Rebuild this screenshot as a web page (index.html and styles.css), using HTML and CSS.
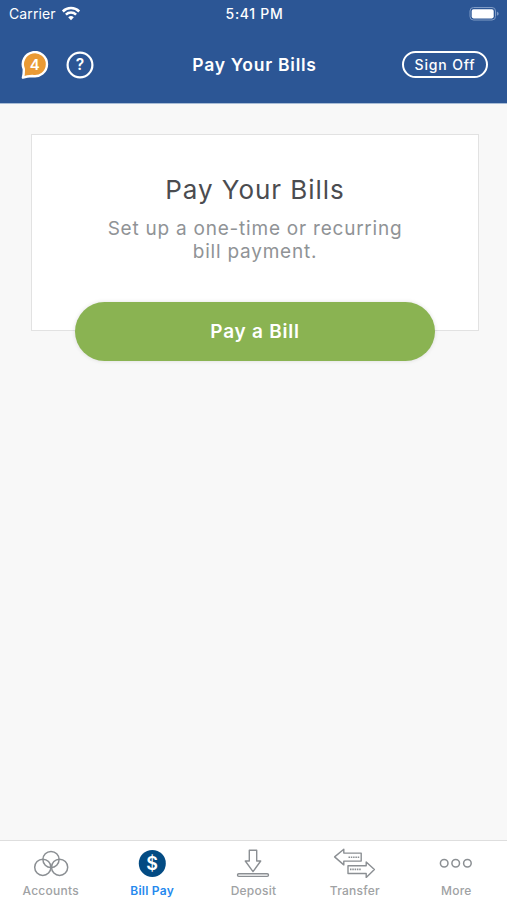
FILE: index.html
```html
<!DOCTYPE html>
<html lang="en">
<head>
    <meta charset="UTF-8">
    <meta name="viewport" content="width=device-width, initial-scale=1.0">
    <title>Pay Your Bills</title>
    <link rel="stylesheet" href="styles.css">
</head>
<body>
    <header>
        <div class="status-bar">
            <div class="carrier">
                <span>Carrier</span>
                <svg width="20" height="15" viewBox="0 0 20 15" fill="none" stroke="#fff" stroke-width="2.5">
                    <path d="M1.8 5.5a11.6 11.6 0 0 1 16.4 0"/>
                    <path d="M4.9 8.7a7.2 7.2 0 0 1 10.2 0"/>
                    <path d="M10 14.2l-2.8-2.9a4 4 0 0 1 5.6 0z" fill="#fff" stroke="none"/>
                </svg>
            </div>
            <span class="time">5:41 PM</span>
            <svg class="battery" width="31" height="16" viewBox="0 0 31 16">
                <rect x="1" y="1.5" width="25.5" height="12.5" rx="3.5" fill="none" stroke="#7f9bc5"/>
                <rect x="2.7" y="3.2" width="22" height="9.2" rx="1.8" fill="#fff"/>
                <path d="M27.9 5.6q1.8.7 1.8 2.1t-1.8 2.1z" fill="#7f9bc5"/>
            </svg>
        </div>
        <div class="nav-bar">
            <div class="nav-left">
                <button class="icon-button" aria-label="Messages">
                    <svg width="28" height="28" viewBox="0 0 28 28">
                        <path d="M1.9 26.6C3 23.5 2.8 21 2.8 18A12.1 12.1 0 1 1 11.3 25Q6.1 25.3 1.9 26.6z" fill="#e99a35" stroke="#fff" stroke-width="2.4" stroke-linejoin="round"/>
                        <text class="badge-text" x="13.8" y="18.8" text-anchor="middle">4</text>
                    </svg>
                </button>
                <button class="icon-button" aria-label="Help">
                    <svg width="28" height="28" viewBox="0 0 28 28">
                        <circle cx="14" cy="14" r="12.4" fill="none" stroke="#fff" stroke-width="2.2"/>
                        <text class="help-text" x="14" y="19.3" text-anchor="middle">?</text>
                    </svg>
                </button>
            </div>
            <h1>Pay Your Bills</h1>
            <button class="sign-off">Sign Off</button>
        </div>
    </header>

    <main>
        <section class="card">
            <h2>Pay Your Bills</h2>
            <p>Set up a one-time or recurring<br>bill payment.</p>
            <button class="pay-button">Pay a Bill</button>
        </section>
    </main>

    <nav class="tab-bar">
        <a class="tab">
            <svg width="44" height="32" viewBox="0 0 44 32" fill="none" stroke="#8b8f93" stroke-width="1.5">
                <circle cx="22" cy="11.5" r="8.1"/>
                <circle cx="13.8" cy="19.3" r="8.1"/>
                <circle cx="30.6" cy="19.3" r="8.1"/>
            </svg>
            <span>Accounts</span>
        </a>
        <a class="tab active">
            <svg width="44" height="32" viewBox="0 0 44 32">
                <circle cx="22.3" cy="15.4" r="13.5" fill="#034b83"/>
                <text class="dollar-text" x="22.3" y="21.6" text-anchor="middle">$</text>
            </svg>
            <span>Bill Pay</span>
        </a>
        <a class="tab">
            <svg width="44" height="32" viewBox="0 0 44 32" fill="none" stroke="#8b8f93" stroke-width="1.4" stroke-linejoin="round">
                <path d="M18.3 2.3h7.4v10.7h4L22 23.6l-7.7-10.6h4z"/>
                <rect x="6.5" y="25.7" width="31" height="2.7" rx="1.3"/>
            </svg>
            <span>Deposit</span>
        </a>
        <a class="tab">
            <svg width="44" height="32" viewBox="0 0 44 32" fill="none" stroke="#8b8f93" stroke-width="1.4" stroke-linejoin="round">
                <path d="M1.6 8.9l9.2-7.6v3.8h17.4v8H10.8v3.8z"/>
                <path d="M41.4 21.4l-8.2-7.5v3.8H15v7.8h18.2v3.9z"/>
                <path d="M15.5 9.2H27M17 21.4h11" stroke-dasharray="1.5 .8" stroke-width="1.6"/>
            </svg>
            <span>Transfer</span>
        </a>
        <a class="tab">
            <svg width="44" height="32" viewBox="0 0 44 32" fill="none" stroke="#8b8f93" stroke-width="1.5">
                <circle cx="10.2" cy="15.3" r="3.8"/>
                <circle cx="21.7" cy="15.3" r="3.8"/>
                <circle cx="33.4" cy="15.3" r="3.8"/>
            </svg>
            <span>More</span>
        </a>
    </nav>
</body>
</html>
```

FILE: styles.css
```css
* {
    box-sizing: border-box;
}

body {
    font-family: Inter, "Liberation Sans", sans-serif;
    background-color: #f8f8f8;
    display: flex;
    flex-direction: column;
    height: 100vh;
    margin: 0;
}

button {
    font-family: inherit;
    color: white;
    background: none;
    border: none;
    padding: 0;
    cursor: pointer;
}

svg {
    display: block;
}

header {
    height: 103px;
    background-color: #2c5695;
    color: white;
    box-shadow: 0 1px 0 #a9bdd6;
}

.status-bar,
.nav-bar {
    display: grid;
    grid-template-columns: 1fr auto 1fr;
    align-items: center;
}

.status-bar {
    height: 27px;
    padding: 0 7px 0 9px;
    font-size: 14px;
}

.carrier {
    display: flex;
    align-items: center;
    gap: 5px;
    letter-spacing: 0.1px;
}

.time {
    font-weight: 500;
    letter-spacing: 0.7px;
}

.battery {
    justify-self: end;
}

.nav-bar {
    height: 75px;
    padding: 0 19px 0 21px;
}

.nav-left {
    display: flex;
    gap: 17px;
}

.icon-button {
    width: 28px;
    height: 28px;
}

.badge-text,
.help-text,
.dollar-text {
    fill: white;
    font-weight: 600;
}

.badge-text {
    font-size: 15px;
}

.help-text {
    font-size: 15.5px;
}

.dollar-text {
    font-size: 18px;
}

h1 {
    margin: 0;
    font-size: 17.5px;
    font-weight: 600;
    letter-spacing: 0.75px;
}

.sign-off {
    justify-self: end;
    width: 86px;
    height: 27px;
    padding-bottom: 1px;
    border: 2px solid white;
    border-radius: 14px;
    font-size: 14px;
    font-weight: 500;
    letter-spacing: 0.85px;
}

main {
    flex: 1;
    padding: 31px 28px 0 31px;
}

.card {
    display: flex;
    flex-direction: column;
    align-items: center;
    height: 197px;
    padding-top: 38px;
    background-color: white;
    border: 1px solid #e2e2e2;
    text-align: center;
}

h2 {
    margin: 0;
    color: #4b4c50;
    font-size: 26px;
    font-weight: 400;
    line-height: 34px;
    letter-spacing: 0.95px;
}

.card p {
    margin: 10px 0 0;
    color: #909396;
    font-size: 19px;
    line-height: 23px;
    letter-spacing: 0.77px;
}

.pay-button {
    flex-shrink: 0;
    width: 360px;
    height: 59px;
    margin-top: 39px;
    border-radius: 30px;
    background-color: #8ab352;
    box-shadow: 0 0 4px rgba(0, 0, 0, 0.12);
    font-size: 19px;
    font-weight: 600;
    letter-spacing: 0.75px;
}

.tab-bar {
    display: grid;
    grid-template-columns: repeat(5, 1fr);
    height: 60px;
    padding-top: 7px;
    background-color: white;
    border-top: 1px solid #dedede;
}

.tab {
    display: flex;
    flex-direction: column;
    align-items: center;
    gap: 3px;
    color: #a0a2a4;
    font-size: 12px;
    font-weight: 500;
    line-height: 16px;
    letter-spacing: 0.25px;
}

.tab.active {
    color: #2589ee;
    font-weight: 600;
}
```
